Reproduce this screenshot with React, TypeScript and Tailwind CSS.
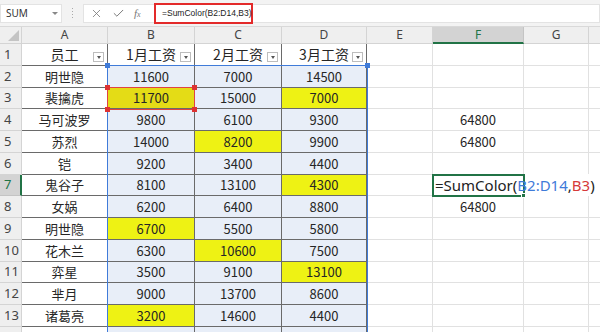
import { X, Check } from "lucide-react";

const cols = [
    { key: "A", w: 86 },
    { key: "B", w: 87 },
    { key: "C", w: 87 },
    { key: "D", w: 85 },
    { key: "E", w: 66 },
    { key: "F", w: 91 },
    { key: "G", w: 65 },
    { key: "H", w: 40 },
];

const rowHeights = [22, 22, 21, 22, 22, 22, 21, 22, 22, 22, 21, 22, 22, 22];

type Cell = string | { v: string; y: true };

const data: Cell[][] = [
    ["员工", "1月工资", "2月工资", "3月工资"],
    ["明世隐", "11600", "7000", "14500"],
    ["裴擒虎", { v: "11700", y: true }, "15000", { v: "7000", y: true }],
    ["马可波罗", "9800", "6100", "9300"],
    ["苏烈", "14000", { v: "8200", y: true }, "9900"],
    ["铠", "9200", "3400", "4400"],
    ["鬼谷子", "8100", "13100", { v: "4300", y: true }],
    ["女娲", "6200", "6400", "8800"],
    ["明世隐", { v: "6700", y: true }, "5500", "5800"],
    ["花木兰", "6300", { v: "10600", y: true }, "7500"],
    ["弈星", "3500", "9100", { v: "13100", y: true }],
    ["芈月", "9000", "13700", "8600"],
    ["诸葛亮", { v: "3200", y: true }, "14600", "4400"],
    ["", "", "", ""],
];

const fValues: Record<number, string> = { 4: "64800", 5: "64800", 8: "64800" };

const cjk = { fontFamily: '"Noto Sans CJK SC", "Noto Sans", sans-serif' };

function FilterButton() {
    return (
        <span className="absolute right-[3px] bottom-[3px] w-[11px] h-[10px] border border-[#bdbdbd] bg-white flex items-center justify-center">
            <span className="w-0 h-0 border-l-[2.5px] border-r-[2.5px] border-t-[3px] border-l-transparent border-r-transparent border-t-[#555]" />
        </span>
    );
}

function FormulaBar() {
    return (
        <div className="h-[27px] bg-[#f3f3f3] flex items-center border-b border-[#d9d9d9]" style={{ fontFamily: '"Noto Sans", sans-serif' }}>
            <div className="w-[62px] h-[19px] bg-white border border-[#e3e3e3] flex items-center justify-between pl-[5px] pr-[3px]">
                <span className="text-[10px] text-[#333]">SUM</span>
                <span className="w-0 h-0 border-l-[3px] border-r-[3px] border-t-[3px] border-l-transparent border-r-transparent border-t-[#888]" />
            </div>
            <div className="w-[21px] flex flex-col items-center gap-[2px]">
                <span className="w-[1px] h-[1px] bg-[#aaa]" />
                <span className="w-[1px] h-[1px] bg-[#aaa]" />
                <span className="w-[1px] h-[1px] bg-[#aaa]" />
                <span className="w-[1px] h-[1px] bg-[#aaa]" />
            </div>
            <div className="flex-1 h-[19px] bg-white border border-[#e3e3e3] flex items-center">
                <div className="w-[69px] flex items-center pl-[6px] gap-[9px] text-[#777]">
                    <X size={13} strokeWidth={1.5} />
                    <Check size={13} strokeWidth={1.8} />
                    <span className="text-[11px] italic" style={{ fontFamily: '"Liberation Serif", serif' }}>
                        f<span className="text-[8px]">x</span>
                    </span>
                </div>
                <div
                    className="ml-[1px] w-[99px] h-[21px] border-2 border-[#e32a2a] flex items-center pl-[6px] text-[8.5px] text-[#222] bg-white whitespace-nowrap"
                    style={{ fontFamily: '"Liberation Sans", Arial, sans-serif' }}
                >
                    =SumColor(B2:D14,B3)
                </div>
            </div>
        </div>
    );
}

export default function App() {
    const template = `22px ${cols.map((c) => c.w + "px").join(" ")}`;
    const rowTemplate = `17px ${rowHeights.map((h) => h + "px").join(" ")}`;

    return (
        <div className="w-[600px] h-[332px] overflow-hidden bg-white relative">
            <FormulaBar />
            <div className="relative">
                <div className="grid" style={{ gridTemplateColumns: template, gridTemplateRows: rowTemplate }}>
                    {/* corner */}
                    <div className="bg-[#efefef] border-r border-b border-[#d4d4d4] relative">
                        <span className="absolute right-[2px] bottom-[2px] w-0 h-0" style={{ borderBottom: "11px solid #c4c4c4", borderLeft: "11px solid transparent" }} />
                    </div>
                    {cols.map((c) =>
                        c.key === "F" ? (
                            <div key={c.key} className="bg-[#d3d3d3] border-r border-[#c4c4c4] border-b-2 border-b-[#217346] flex items-center justify-center text-[12px] text-[#217346]" style={{ fontFamily: '"Noto Sans", sans-serif' }}>
                                {c.key}
                            </div>
                        ) : (
                            <div key={c.key} className="bg-[#efefef] border-r border-b border-[#d4d4d4] flex items-center justify-center text-[12px] text-[#444]" style={{ fontFamily: '"Noto Sans", sans-serif' }}>
                                {c.key === "H" ? "" : c.key}
                            </div>
                        )
                    )}
                    {rowHeights.map((_, ri) => {
                        const r = ri + 1;
                        const row = data[ri];
                        return [
                            <div
                                key={`h${r}`}
                                className={
                                    r === 7
                                        ? "bg-[#d3d3d3] border-b border-[#c4c4c4] border-r-2 border-r-[#217346] flex items-center pl-[4px] text-[13px] text-[#217346]"
                                        : "bg-[#efefef] border-r border-b border-[#d4d4d4] flex items-center pl-[4px] text-[13px] text-[#444]"
                                }
                                style={{ fontFamily: '"Noto Sans", sans-serif' }}
                            >
                                {r < 14 ? r : ""}
                            </div>,
                            ...cols.map((c, ci) => {
                                if (ci < 4) {
                                    const cell = row[ci];
                                    const v = typeof cell === "string" ? cell : cell.v;
                                    const yellow = typeof cell !== "string";
                                    const inRange = ci > 0 && r >= 2;
                                    let bg = "bg-white";
                                    if (yellow) bg = r === 3 && ci === 1 ? "bg-[#e4dc16]" : "bg-[#eef214]";
                                    else if (inRange) bg = "bg-[#e8eef8]";
                                    return (
                                        <div
                                            key={`${c.key}${r}`}
                                            className={`${bg} border-r border-b border-[#6a6a6a] relative flex items-center justify-center ${r === 1 ? "text-[14px]" : "text-[13px]"} text-[#262626]`}
                                            style={cjk}
                                        >
                                            {v}
                                            {r === 1 && <FilterButton />}
                                        </div>
                                    );
                                }
                                return (
                                    <div
                                        key={`${c.key}${r}`}
                                        className="bg-white border-r border-b border-[#e1e1e1] flex items-center justify-center text-[13px] text-[#262626]"
                                        style={cjk}
                                    >
                                        {c.key === "F" && fValues[r] ? fValues[r] : ""}
                                    </div>
                                );
                            }),
                        ];
                    })}
                </div>

                {/* blue reference range B2:D14 */}
                <div className="absolute left-[107px] top-[38px] w-[261px] h-[300px] border-[1.5px] border-[#3f7bd9] pointer-events-none">
                    <span className="absolute -left-[3px] -top-[3px] w-[5px] h-[5px] bg-[#3f7bd9]" />
                    <span className="absolute -right-[3px] -top-[3px] w-[5px] h-[5px] bg-[#3f7bd9]" />
                </div>

                {/* red reference B3 */}
                <div className="absolute left-[107px] top-[60px] w-[88px] h-[23px] border-[1.5px] border-[#e04343] pointer-events-none">
                    <span className="absolute -left-[3px] -top-[3px] w-[5px] h-[5px] bg-[#d33]" />
                    <span className="absolute -right-[3px] -top-[3px] w-[5px] h-[5px] bg-[#d33]" />
                    <span className="absolute -left-[3px] -bottom-[3px] w-[5px] h-[5px] bg-[#d33]" />
                    <span className="absolute -right-[3px] -bottom-[3px] w-[5px] h-[5px] bg-[#d33]" />
                </div>

                {/* F7 editor */}
                <div className="absolute left-[433px] top-[147px] h-[22px] w-[167px] bg-white" />
                <div className="absolute left-[432px] top-[147px] h-[23px] w-[93px] border-2 border-[#217346] pointer-events-none">
                    <span className="absolute -right-[3px] -bottom-[3px] w-[5px] h-[5px] bg-[#217346] border border-white" />
                </div>
                <div className="absolute left-[433px] top-[147px] h-[22px] w-[167px] flex items-center pl-[2px] text-[15px] text-[#222] whitespace-nowrap" style={{ fontFamily: '"Noto Sans", sans-serif' }}>
                    <span>=SumColor(</span>
                    <span className="text-[#3f7bd9]">B2:D14</span>
                    <span>,</span>
                    <span className="text-[#d63a3a]">B3</span>
                    <span>)</span>
                </div>
            </div>
        </div>
    );
}
